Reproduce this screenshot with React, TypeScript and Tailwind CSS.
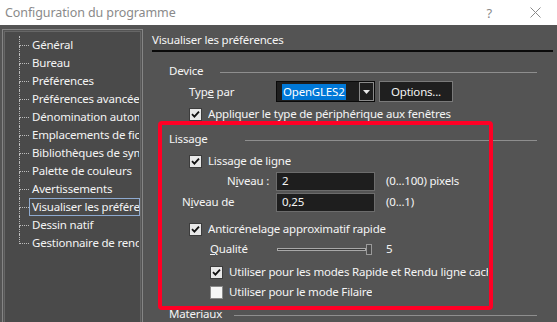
import { ReactNode } from 'react';

const treeItems = [
  'Général',
  'Bureau',
  'Préférences',
  'Préférences avancées',
  'Dénomination automatique',
  'Emplacements de fichiers',
  'Bibliothèques de symboles',
  'Palette de couleurs',
  'Avertissements',
  'Visualiser les préférences',
  'Dessin natif',
  'Gestionnaire de rendu',
];

const Check = ({ checked }: { checked: boolean }) => (
  <span
    className={`flex h-[13px] w-[13px] shrink-0 items-center justify-center border ${
      checked ? 'border-[#3c3c3c] bg-[#e8e8e8]' : 'border-[#8a8a8a] bg-[#f7f7f7]'
    }`}
  >
    {checked ? (
      <svg width="9" height="9" viewBox="0 0 9 9">
        <path d="M1 4.2 L3.4 6.6 L8 1.6" stroke="#111" strokeWidth="1.8" fill="none" />
      </svg>
    ) : null}
  </span>
);

const GroupTitle = ({ label, lineLeft }: { label: string; lineLeft: string }) => (
  <div className="flex h-[16px] items-center pl-[18px] pr-[16px]">
    <span className="whitespace-nowrap">{label}</span>
    <div className={`${lineLeft} mt-[3px] h-px flex-1 bg-[#8e8e8e]`} />
  </div>
);

const CheckRow = ({ checked, children, pl }: { checked: boolean; children: ReactNode; pl: string }) => (
  <div className={`flex h-[20px] items-center gap-[6px] ${pl}`}>
    <Check checked={checked} />
    <span className="overflow-hidden whitespace-nowrap">{children}</span>
  </div>
);

const App = () => {
  return (
    <div
      className="relative h-[322px] w-[557px] overflow-hidden bg-[#545454] text-[11.5px] leading-[16px] tracking-[-0.2px] text-[#f4f4f4]"
      style={{ fontFamily: '"Noto Sans", "Open Sans", sans-serif' }}
    >
      <div className="flex h-[25px] items-center bg-white pl-[5px] text-[#8a8a8a]">
        <span className="text-[12.5px] tracking-[-0.1px]">Configuration du programme</span>
        <span className="ml-auto mr-[38px] text-[13px]">?</span>
        <svg width="11" height="11" viewBox="0 0 11 11" className="mr-[16px]">
          <path d="M0.5 0.5 L10.5 10.5 M10.5 0.5 L0.5 10.5" stroke="#8a8a8a" strokeWidth="1" />
        </svg>
      </div>

      <div className="flex h-[297px]">
        <div className="ml-[2px] mt-[4px] h-[310px] w-[141px] border border-[#858585] p-px">
          <div className="h-full border border-[#666] bg-[#4a4a4a] pl-[14px] pt-[4px]">
            {treeItems.map((item, i) => {
              const last = i === treeItems.length - 1;
              const selected = item === 'Visualiser les préférences';
              return (
                <div key={item} className="flex h-[18px]">
                  <div className="w-[10px] shrink-0">
                    <div className="h-[10px] border-b border-l border-dotted border-[#bdbdbd]" />
                    {!last ? <div className="h-[8px] border-l border-dotted border-[#bdbdbd]" /> : null}
                  </div>
                  <div
                    className={`flex min-w-0 flex-1 items-center overflow-hidden whitespace-nowrap border pl-[2px] ${
                      selected ? 'border-[#8eaad0]' : 'border-transparent'
                    }`}
                  >
                    {item}
                  </div>
                </div>
              );
            })}
          </div>
        </div>

        <div className="min-w-0 flex-1 pl-[9px] pr-[4px]">
          <div className="mt-[7px] h-[16px] whitespace-nowrap">Visualiser les préférences</div>
          <div className="mt-[2px] h-[2px] bg-[#0a0a0a]" />

          <div className="-ml-px mt-[11px]">
            <GroupTitle label="Device" lineLeft="ml-[17px]" />

            <div className="mt-[2px] flex h-[21px] items-center pl-[38px]">
              <span className="w-[87px]">
                Typ<span className="underline">e</span> par
              </span>
              <div className="flex h-[21px] w-[99px] border border-[#0a0a0a] bg-[#1e1e1e]">
                <div className="flex flex-1 items-center pl-[5px]">
                  <span className="bg-[#0078d7] px-px leading-[16px] text-white">OpenGLES2</span>
                </div>
                <div className="flex w-[15px] items-center justify-center border border-[#8a8a8a] bg-[#1e1e1e]">
                  <svg width="7" height="4" viewBox="0 0 7 4">
                    <path d="M0 0 L7 0 L3.5 4 Z" fill="#e8e8e8" />
                  </svg>
                </div>
              </div>
              <div className="ml-[4px] flex h-[21px] w-[74px] items-center justify-center border border-[#7a7a7a] bg-[#1f1f1f]">
                Options...
              </div>
            </div>

            <div className="mt-[2px]">
              <CheckRow checked pl="pl-[38px]">
                Appliquer le type de périphérique aux fenêtres
              </CheckRow>
            </div>

            <div className="mt-[7px]">
              <GroupTitle label="Lissage" lineLeft="ml-[37px]" />
            </div>

            <div className="mt-[4px]">
              <CheckRow checked pl="pl-[38px]">
                Lissage de ligne
              </CheckRow>
            </div>

            <div className="flex h-[20px] items-center">
              <span className="w-[125px] pl-[76px]">
                N<span className="underline">i</span>veau :
              </span>
              <div className="flex h-[19px] w-[99px] items-center border border-[#6c6c6c] bg-[#1e1e1e] pl-[5px]">2</div>
              <span className="ml-[11px]">(0...100) pixels</span>
            </div>
            <div className="mt-px flex h-[20px] items-center">
              <span className="w-[125px] pl-[31px]">
                N<span className="underline">i</span>veau de
              </span>
              <div className="flex h-[19px] w-[99px] items-center border border-[#6c6c6c] bg-[#1e1e1e] pl-[5px]">0,25</div>
              <span className="ml-[11px]">(0...1)</span>
            </div>

            <div className="mt-[7px]">
              <CheckRow checked pl="pl-[38px]">
                Anticrénelage approximatif rapide
              </CheckRow>
            </div>

            <div className="flex h-[20px] items-center">
              <span className="w-[126px] pl-[59px]">
                <span className="underline">Q</span>ualité
              </span>
              <div className="flex h-[11px] w-[95px] items-center">
                <div className="h-[3px] flex-1 border border-[#a8a8a8] bg-[#3a3a3a]" />
                <div className="h-[11px] w-[6px] border border-[#9a9a9a] bg-[#4a4a4a]" />
              </div>
              <span className="ml-[14px]">5</span>
            </div>

            <div className="mt-[3px] w-[337px]">
              <CheckRow checked pl="pl-[59px]">
                Utiliser pour les modes Rapide et Rendu ligne cachée
              </CheckRow>
            </div>
            <div className="h-[19px]">
              <CheckRow checked={false} pl="pl-[59px]">
                Utiliser pour le mode Filaire
              </CheckRow>
            </div>

            <div className="mt-[5px]">
              <GroupTitle label="Materiaux" lineLeft="ml-[12px]" />
            </div>
          </div>
        </div>
      </div>

      <div className="pointer-events-none absolute left-[158px] top-[121px] h-[189px] w-[335px] rounded-[4px] border-4 border-[#ff0025]" />
    </div>
  );
};

export default App;
